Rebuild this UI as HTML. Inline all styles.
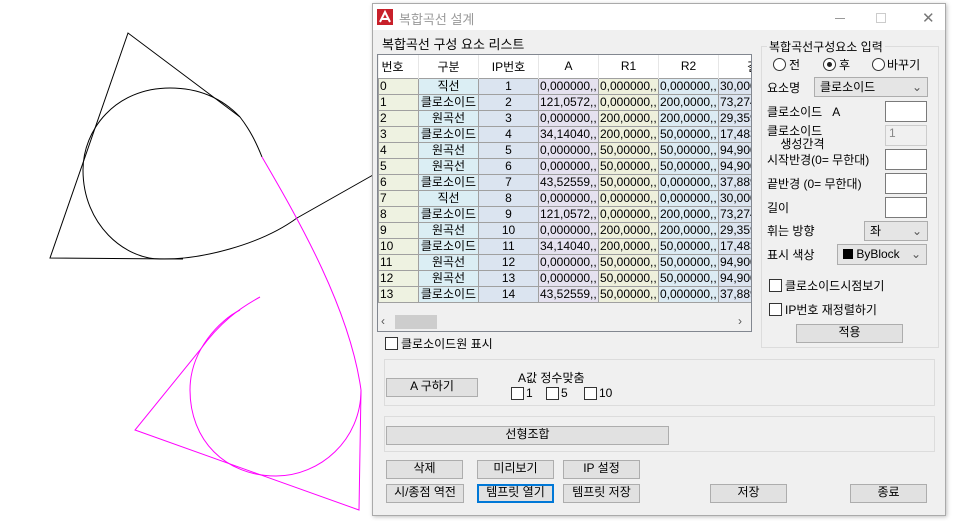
<!DOCTYPE html>
<html><head><meta charset="utf-8">
<style>
*{box-sizing:border-box;margin:0;padding:0}
body{width:953px;height:521px;background:#fff;position:relative;overflow:hidden;font-family:"Liberation Sans","Noto Sans CJK KR","NanumGothic",sans-serif;font-size:12px;color:#000}
.a{position:absolute}
.dlg{left:372px;top:3px;width:574px;height:513px;background:#f0f0f0;border:1px solid #aaa;box-shadow:1px 1px 4px rgba(0,0,0,.25)}
.tb{left:0;top:0;width:572px;height:26px;background:#fff}
.btn{position:absolute;background:#e1e1e1;border:1px solid #adadad;text-align:center;line-height:15px;font-size:12px}
.chk{position:absolute;width:13px;height:13px;border:1px solid #333;background:#fff}
.grp{position:absolute;border:1px solid #dcdcdc}
table{border-collapse:collapse;table-layout:fixed}
td{height:16px;border:1px solid #a0a0a0;padding:0 1px;white-space:nowrap;overflow:hidden;font-size:12px;line-height:14px}
th{height:23px;font-weight:normal;background:#fff;border-right:1px solid #e6e6e6;font-size:12px}
.c0{background:#eef2e1}.c1{background:#dbeef4;text-align:center}.c2{background:#dbe4f0;text-align:center}.c3{background:#e5e1ef}.c4{background:#eef0dc}.c5{background:#dcebf3}.c6{background:#dce4ef}
.inp{position:absolute;background:#fff;border:1px solid #7a7a7a}
.cb{position:absolute;background:#e5e5e5;border:1px solid #adadad;padding-left:5px;line-height:18px}
</style></head><body>
<svg class="a" style="left:0;top:0" width="380" height="521">
<g fill="none" stroke="#000" stroke-width="1">
<polyline points="183,259 50,258 128,33 240,117"/>
<path d="M240,117 C220,96 195,88 170,88 C115,88 83,130 83,170 C83,225 125,259 160,259 C200,260 260,245 297,218 L373,175"/>
<path d="M240,117 C250,130 256,142 262,157"/>
</g>
<g fill="none" stroke="#f0f" stroke-width="1">
<path d="M262,157 C300,222 350,310 361,390 L359,510 L135,430 L200,350 C220,322 240,308 260,297"/>
<path d="M361,390 C361,440 320,476 276,476 C225,476 190,440 190,390 C190,350 220,320 240,310"/>
</g>
</svg>
<div class="a dlg">
<div class="a tb"></div>
<svg class="a" style="left:4px;top:5px" width="16" height="16"><rect width="16" height="16" fill="#c8202a"/><path d="M3,13 L8,3 L13,13 M5,10 H11" stroke="#fff" stroke-width="2" fill="none"/></svg>
<div class="a" style="left:26px;top:5px;color:#999;font-size:13px">복합곡선 설계</div>
<div class="a" style="left:462px;top:14px;width:10px;height:1px;background:#999"></div>
<div class="a" style="left:503px;top:9px;width:10px;height:10px;border:1px solid #ccc"></div>
<div class="a" style="left:549px;top:5px;color:#777;font-size:15px">✕</div>
<div class="a" style="left:9px;top:30px;font-size:13px">복합곡선 구성 요소 리스트</div>
<div class="a" style="left:4px;top:50px;width:375px;height:278px;border:1px solid #828790;background:#f0f0f0;overflow:hidden">
<table style="width:380px">
<colgroup><col style="width:40px"><col style="width:60px"><col style="width:60px"><col style="width:60px"><col style="width:60px"><col style="width:60px"><col style="width:40px"></colgroup>
<tr><th style="text-align:left;padding-left:3px">번호</th><th>구분</th><th>IP번호</th><th>A</th><th>R1</th><th>R2</th><th style="text-align:right">길</th></tr>
<tr><td class="c0">0</td><td class="c1">직선</td><td class="c2">1</td><td class="c3">0,000000,,</td><td class="c4">0,000000,,</td><td class="c5">0,000000,,</td><td class="c6">30,000</td></tr>
<tr><td class="c0">1</td><td class="c1">클로소이드</td><td class="c2">2</td><td class="c3">121,0572,,</td><td class="c4">0,000000,,</td><td class="c5">200,0000,,</td><td class="c6">73,274</td></tr>
<tr><td class="c0">2</td><td class="c1">원곡선</td><td class="c2">3</td><td class="c3">0,000000,,</td><td class="c4">200,0000,,</td><td class="c5">200,0000,,</td><td class="c6">29,359</td></tr>
<tr><td class="c0">3</td><td class="c1">클로소이드</td><td class="c2">4</td><td class="c3">34,14040,,</td><td class="c4">200,0000,,</td><td class="c5">50,00000,,</td><td class="c6">17,483</td></tr>
<tr><td class="c0">4</td><td class="c1">원곡선</td><td class="c2">5</td><td class="c3">0,000000,,</td><td class="c4">50,00000,,</td><td class="c5">50,00000,,</td><td class="c6">94,900</td></tr>
<tr><td class="c0">5</td><td class="c1">원곡선</td><td class="c2">6</td><td class="c3">0,000000,,</td><td class="c4">50,00000,,</td><td class="c5">50,00000,,</td><td class="c6">94,900</td></tr>
<tr><td class="c0">6</td><td class="c1">클로소이드</td><td class="c2">7</td><td class="c3">43,52559,,</td><td class="c4">50,00000,,</td><td class="c5">0,000000,,</td><td class="c6">37,889</td></tr>
<tr><td class="c0">7</td><td class="c1">직선</td><td class="c2">8</td><td class="c3">0,000000,,</td><td class="c4">0,000000,,</td><td class="c5">0,000000,,</td><td class="c6">30,000</td></tr>
<tr><td class="c0">8</td><td class="c1">클로소이드</td><td class="c2">9</td><td class="c3">121,0572,,</td><td class="c4">0,000000,,</td><td class="c5">200,0000,,</td><td class="c6">73,274</td></tr>
<tr><td class="c0">9</td><td class="c1">원곡선</td><td class="c2">10</td><td class="c3">0,000000,,</td><td class="c4">200,0000,,</td><td class="c5">200,0000,,</td><td class="c6">29,359</td></tr>
<tr><td class="c0">10</td><td class="c1">클로소이드</td><td class="c2">11</td><td class="c3">34,14040,,</td><td class="c4">200,0000,,</td><td class="c5">50,00000,,</td><td class="c6">17,483</td></tr>
<tr><td class="c0">11</td><td class="c1">원곡선</td><td class="c2">12</td><td class="c3">0,000000,,</td><td class="c4">50,00000,,</td><td class="c5">50,00000,,</td><td class="c6">94,900</td></tr>
<tr><td class="c0">12</td><td class="c1">원곡선</td><td class="c2">13</td><td class="c3">0,000000,,</td><td class="c4">50,00000,,</td><td class="c5">50,00000,,</td><td class="c6">94,900</td></tr>
<tr><td class="c0">13</td><td class="c1">클로소이드</td><td class="c2">14</td><td class="c3">43,52559,,</td><td class="c4">50,00000,,</td><td class="c5">0,000000,,</td><td class="c6">37,889</td></tr>
</table>
<div class="a" style="left:0;top:259px;width:373px;height:17px;background:#f0f0f0">
<div class="a" style="left:3px;top:0;font-size:12px;color:#555">‹</div>
<div class="a" style="left:17px;top:1px;width:42px;height:14px;background:#cdcdcd"></div>
<div class="a" style="left:360px;top:0;font-size:12px;color:#555">›</div>
</div>
</div>
<div class="chk" style="left:12px;top:333px"></div><div class="a" style="left:28px;top:331px">클로소이드원 표시</div>
<!-- right group -->
<div class="grp" style="left:388px;top:42px;width:178px;height:302px"></div>
<div class="a" style="left:394px;top:34px;background:#f0f0f0;padding:0 2px">복합곡선구성요소 입력</div>
<div class="a" style="left:400px;top:54px;width:13px;height:13px;border:1px solid #333;border-radius:50%;background:#fff"></div><div class="a" style="left:416px;top:52px">전</div>
<div class="a" style="left:450px;top:54px;width:13px;height:13px;border:1px solid #333;border-radius:50%;background:#fff"><div class="a" style="left:3px;top:3px;width:5px;height:5px;border-radius:50%;background:#222"></div></div><div class="a" style="left:466px;top:52px">후</div>
<div class="a" style="left:499px;top:54px;width:13px;height:13px;border:1px solid #333;border-radius:50%;background:#fff"></div><div class="a" style="left:514px;top:52px">바꾸기</div>
<div class="a" style="left:394px;top:75px">요소명</div>
<div class="cb" style="left:441px;top:73px;width:114px;height:20px">클로소이드<span style="position:absolute;right:5px;color:#555">⌄</span></div>
<div class="a" style="left:394px;top:99px">클로소이드&nbsp;&nbsp;&nbsp;A</div>
<div class="inp" style="left:512px;top:97px;width:42px;height:21px"></div>
<div class="a" style="left:394px;top:121px;line-height:13px">클로소이드<br>&nbsp;&nbsp;&nbsp;&nbsp;생성간격</div>
<div class="a" style="left:512px;top:121px;width:42px;height:21px;border:1px solid #ccc;color:#888;padding-left:3px">1</div>
<div class="a" style="left:394px;top:147px">시작반경(0= 무한대)</div>
<div class="inp" style="left:512px;top:145px;width:42px;height:21px"></div>
<div class="a" style="left:394px;top:171px">끝반경 (0= 무한대)</div>
<div class="inp" style="left:512px;top:169px;width:42px;height:21px"></div>
<div class="a" style="left:394px;top:195px">길이</div>
<div class="inp" style="left:512px;top:193px;width:42px;height:21px"></div>
<div class="a" style="left:394px;top:218px">휘는 방향</div>
<div class="cb" style="left:491px;top:217px;width:64px;height:20px">좌<span style="position:absolute;right:5px;color:#555">⌄</span></div>
<div class="a" style="left:394px;top:242px">표시 색상</div>
<div class="cb" style="left:464px;top:240px;width:90px;height:21px"><span style="display:inline-block;width:10px;height:10px;background:#000;vertical-align:-1px"></span> ByBlock<span style="position:absolute;right:5px;color:#555">⌄</span></div>
<div class="chk" style="left:396px;top:275px"></div><div class="a" style="left:412px;top:273px">클로소이드시점보기</div>
<div class="chk" style="left:396px;top:299px"></div><div class="a" style="left:412px;top:297px">IP번호 재정렬하기</div>
<div class="btn" style="left:423px;top:320px;width:107px;height:19px">적용</div>
<!-- groups -->
<div class="grp" style="left:11px;top:355px;width:551px;height:47px"></div>
<div class="btn" style="left:13px;top:374px;width:92px;height:19px">A 구하기</div>
<div class="a" style="left:145px;top:365px">A값 정수맞춤</div>
<div class="chk" style="left:138px;top:383px"></div><div class="a" style="left:153px;top:382px">1</div>
<div class="chk" style="left:173px;top:383px"></div><div class="a" style="left:188px;top:382px">5</div>
<div class="chk" style="left:211px;top:383px"></div><div class="a" style="left:226px;top:382px">10</div>
<div class="grp" style="left:11px;top:412px;width:551px;height:36px"></div>
<div class="btn" style="left:13px;top:422px;width:283px;height:19px">선형조합</div>
<div class="btn" style="left:13px;top:456px;width:77px;height:19px">삭제</div>
<div class="btn" style="left:104px;top:456px;width:77px;height:19px">미리보기</div>
<div class="btn" style="left:190px;top:456px;width:77px;height:19px">IP 설정</div>
<div class="btn" style="left:13px;top:480px;width:78px;height:19px">시/종점 역전</div>
<div class="btn" style="left:104px;top:480px;width:77px;height:19px;border:2px solid #0078d7;line-height:13px">템프릿 열기</div>
<div class="btn" style="left:190px;top:480px;width:77px;height:19px">템프릿 저장</div>
<div class="btn" style="left:337px;top:480px;width:77px;height:19px">저장</div>
<div class="btn" style="left:477px;top:480px;width:77px;height:19px">종료</div>
</div>
</body></html>
